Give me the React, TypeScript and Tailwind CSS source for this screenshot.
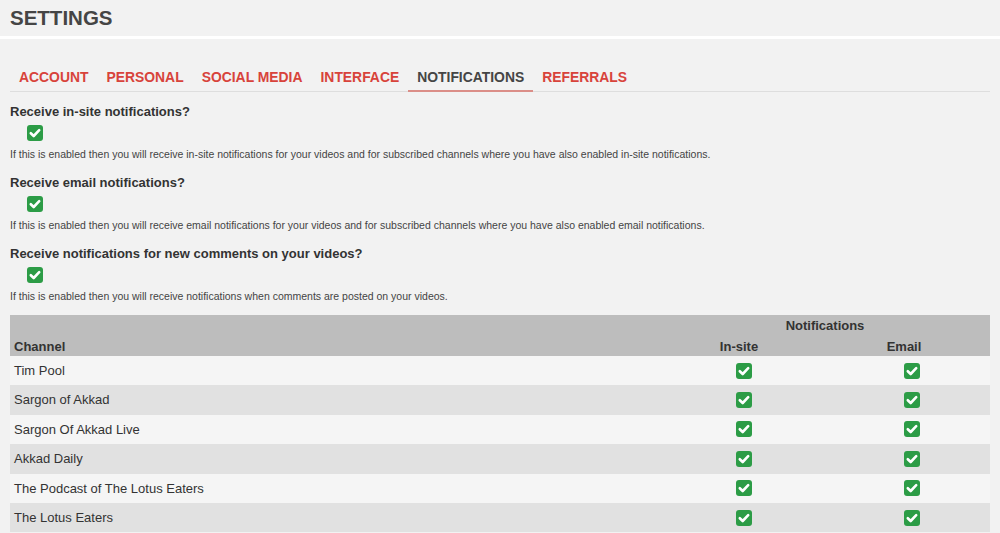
import React from "react";

type Channel = { name: string; inSite: boolean; email: boolean };

const tabs = ["Account", "Personal", "Social Media", "Interface", "Notifications", "Referrals"];

const options = [
  {
    label: "Receive in-site notifications?",
    help: "If this is enabled then you will receive in-site notifications for your videos and for subscribed channels where you have also enabled in-site notifications.",
  },
  {
    label: "Receive email notifications?",
    help: "If this is enabled then you will receive email notifications for your videos and for subscribed channels where you have also enabled email notifications.",
  },
  {
    label: "Receive notifications for new comments on your videos?",
    help: "If this is enabled then you will receive notifications when comments are posted on your videos.",
  },
];

const channels: Channel[] = [
  { name: "Tim Pool", inSite: true, email: true },
  { name: "Sargon of Akkad", inSite: true, email: true },
  { name: "Sargon Of Akkad Live", inSite: true, email: true },
  { name: "Akkad Daily", inSite: true, email: true },
  { name: "The Podcast of The Lotus Eaters", inSite: true, email: true },
  { name: "The Lotus Eaters", inSite: true, email: true },
];

function CheckBox() {
  return (
    <svg width="16" height="16" viewBox="0 0 16 16" className="block">
      <rect x="0" y="0" width="16" height="16" rx="3" fill="#2c9c46" />
      <path d="M3.8 8.2 L6.7 11 L12.2 5.2" fill="none" stroke="#fff" strokeWidth="2.6" strokeLinecap="round" strokeLinejoin="round" />
    </svg>
  );
}

export default function App() {
  return (
    <div className="min-h-[533px] w-full bg-[#f2f2f2] font-['Liberation_Sans',Arial,sans-serif] text-[#333]">
      {/* Page title */}
      <div className="h-9 px-[10px] flex items-center">
        <h1 className="text-[20.5px] font-bold leading-none text-[#454545]">SETTINGS</h1>
      </div>
      <div className="h-[3px] bg-white" />

      <div className="px-[10px]">
        {/* Tabs */}
        <div className="mt-[22px] flex border-b border-[#dedede]">
          {tabs.map((t) => {
            const active = t === "Notifications";
            return (
              <div
                key={t}
                className={
                  "-mb-px px-[9px] pt-[6px] pb-[3px] border-b-2 text-[13.9px] leading-5 font-bold uppercase " +
                  (active ? "border-[#db8e88] text-[#454545]" : "border-transparent text-[#d8433b]")
                }
              >
                {t}
              </div>
            );
          })}
        </div>

        {/* Global notification options */}
        <div className="mt-[12px] flex flex-col gap-[14px]">
          {options.map((o) => (
            <div key={o.label}>
              <div className="text-[13px] leading-4 font-bold text-[#333]">{o.label}</div>
              <div className="mt-[5px] ml-[17px]">
                <CheckBox />
              </div>
              <div className="mt-[6px] text-[10.5px] leading-[14px] text-[#444]">{o.help}</div>
            </div>
          ))}
        </div>

        {/* Per channel settings */}
        <table className="mt-[12px] w-full table-fixed border-collapse text-[13px]">
          <colgroup>
            <col className="w-[650px]" />
            <col className="w-[158px]" />
            <col />
          </colgroup>
          <thead className="bg-[#bdbdbd] font-bold text-[#333]">
            <tr className="h-[20px]">
              <th />
              <th colSpan={2} className="pt-[1px] text-center font-bold leading-4">
                Notifications
              </th>
            </tr>
            <tr className="h-[21px]">
              <th className="pl-1 text-left align-bottom pb-[1px] leading-4">Channel</th>
              <th className="text-center align-bottom pb-[1px] leading-4">In-site</th>
              <th className="text-center align-bottom pb-[1px] leading-4">Email</th>
            </tr>
          </thead>
          <tbody>
            {channels.map((c, i) => (
              <tr key={c.name} className={"h-[29.4px] " + (i % 2 === 0 ? "bg-[#f5f5f5]" : "bg-[#e1e1e1]")}>
                <td className="pl-1 text-[#333]">{c.name}</td>
                <td>
                  <div className="flex justify-center pl-[10px]">{c.inSite && <CheckBox />}</div>
                </td>
                <td>
                  <div className="flex justify-center pl-[16px]">{c.email && <CheckBox />}</div>
                </td>
              </tr>
            ))}
          </tbody>
        </table>
      </div>
    </div>
  );
}
